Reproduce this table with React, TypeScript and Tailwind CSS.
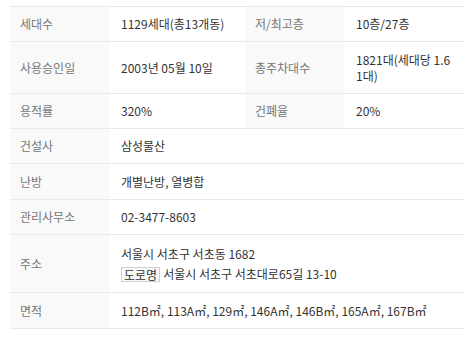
import React from "react";

const th = "bg-[#f9f9f9] text-[#777] font-normal text-left align-middle pl-[10px] pr-2 border-b border-[#e9e9e9]";
const td = "text-[#333] text-left align-middle pl-3 pr-3 border-b border-[#e9e9e9]";

export default function App() {
  return (
    <div
      className="w-[474px] h-[343px] bg-white pt-[6px] pl-[10px]"
      style={{ fontFamily: '"Noto Sans CJK KR", "Noto Sans", sans-serif' }}
    >
      <table className="w-[454px] table-fixed border-collapse border-t border-[#e9e9e9] text-[12px] leading-[16px]">
        <colgroup>
          <col className="w-[99px]" />
          <col className="w-[136px]" />
          <col className="w-[99px]" />
          <col className="w-[120px]" />
        </colgroup>
        <tbody>
          <tr className="h-[35px]">
            <th className={th}>세대수</th>
            <td className={td}>1129세대(총13개동)</td>
            <th className={th}>저/최고층</th>
            <td className={td}>10층/27층</td>
          </tr>
          <tr className="h-[52px]">
            <th className={th}>사용승인일</th>
            <td className={td}>2003년 05월 10일</td>
            <th className={th}>총주차대수</th>
            <td className={td + " break-all"}>1821대(세대당 1.61대)</td>
          </tr>
          <tr className="h-[35px]">
            <th className={th}>용적률</th>
            <td className={td}>320%</td>
            <th className={th}>건폐율</th>
            <td className={td}>20%</td>
          </tr>
          <tr className="h-[35px]">
            <th className={th}>건설사</th>
            <td className={td} colSpan={3}>삼성물산</td>
          </tr>
          <tr className="h-[36px]">
            <th className={th}>난방</th>
            <td className={td} colSpan={3}>개별난방, 열병합</td>
          </tr>
          <tr className="h-[35px]">
            <th className={th}>관리사무소</th>
            <td className={td} colSpan={3}>02-3477-8603</td>
          </tr>
          <tr className="h-[58px]">
            <th className={th}>주소</th>
            <td className={td} colSpan={3}>
              <div className="leading-[18px]">서울시 서초구 서초동 1682</div>
              <div className="mt-[3px] flex items-center gap-[3px] leading-[16px]">
                <span className="inline-block border border-[#d0d0d0] bg-[#fafafa] px-[2px] leading-[13px] py-0">도로명</span>
                <span>서울시 서초구 서초대로65길 13-10</span>
              </div>
            </td>
          </tr>
          <tr className="h-[36px]">
            <th className={th}>면적</th>
            <td className={td} colSpan={3}>112B㎡, 113A㎡, 129㎡, 146A㎡, 146B㎡, 165A㎡, 167B㎡</td>
          </tr>
        </tbody>
      </table>
    </div>
  );
}
